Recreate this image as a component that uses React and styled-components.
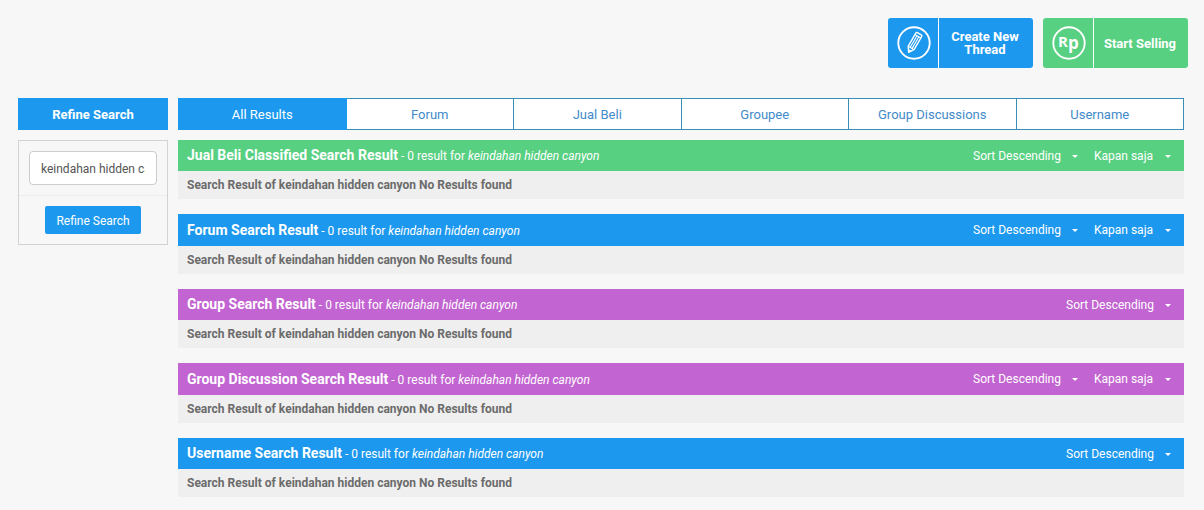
import React, { useState } from "react";
import styled, { createGlobalStyle } from "styled-components";

const colors = {
  blue: "#1c98ee",
  green: "#57d081",
  purple: "#c264d1",
  link: "#428bca",
  tabBorder: "#3a8fb5",
};

const GlobalStyle = createGlobalStyle`
  * {
    box-sizing: border-box;
  }
  body {
    margin: 0;
    background: #f7f7f7;
    color: #6b6b6b;
    font-family: Roboto, "Liberation Sans", sans-serif;
    font-size: 12px;
    line-height: 16px;
  }
  button, input, select {
    font: inherit;
  }
`;

const Page = styled.div`
  padding: 18px 20px 13px 18px;
`;

const Actions = styled.header`
  display: flex;
  justify-content: flex-end;
  gap: 10px;
  margin: 0 -4px 30px 0;
`;

const ActionButton = styled.button`
  display: flex;
  width: 145px;
  height: 50px;
  padding: 0;
  border: none;
  border-radius: 3px;
  background: ${({ $color }) => $color};
  color: #fff;
  font-size: 13px;
  font-weight: 700;
  line-height: 13px;
  cursor: pointer;
`;

const ActionIcon = styled.span`
  display: flex;
  align-items: center;
  justify-content: center;
  width: 51px;
  height: 100%;
  padding-left: 2px;
  border-right: 1px solid #fff;
`;

const ActionLabel = styled.span`
  flex: 1;
  align-self: center;
  padding: 0 9px 0 7px;
  text-align: center;
`;

const Columns = styled.div`
  display: grid;
  grid-template-columns: 150px minmax(0, 1fr);
  align-items: start;
  gap: 10px;
`;

const SideTitle = styled.h2`
  margin: 0 0 10px;
  padding-top: 2px;
  background: ${colors.blue};
  color: #fff;
  font-size: 13px;
  font-weight: 700;
  line-height: 30px;
  text-align: center;
`;

const RefineForm = styled.form`
  border: 1px solid #d3d3d3;
`;

const RefineRow = styled.div`
  padding: 10px;
  text-align: center;
  & + & {
    border-top: 1px solid #ececec;
  }
`;

const SearchInput = styled.input`
  display: block;
  width: 100%;
  height: 34px;
  padding: 8px 11px 6px;
  border: 1px solid #ccc;
  border-radius: 4px;
  background: #fff;
  color: #555;
`;

const SubmitButton = styled.button`
  display: block;
  width: 96px;
  height: 28px;
  margin: 0 auto;
  padding: 2px 0 0;
  border: none;
  border-radius: 2px;
  background: ${colors.blue};
  color: #fff;
  cursor: pointer;
`;

const Tabs = styled.nav`
  display: flex;
  margin-bottom: 10px;
`;

const Tab = styled.a`
  flex: 1 1 0;
  padding-top: 2px;
  border: 1px solid ${({ $active }) => ($active ? colors.blue : colors.tabBorder)};
  border-left-width: 0;
  background: ${({ $active }) => ($active ? colors.blue : "#fff")};
  color: ${({ $active }) => ($active ? "#fff" : colors.link)};
  font-size: 13px;
  line-height: 28px;
  text-align: center;
  text-decoration: none;
  &:first-child {
    border-left-width: 1px;
  }
`;

const Results = styled.div`
  display: flex;
  flex-direction: column;
  gap: 15px;
`;

const ResultHead = styled.div`
  display: flex;
  align-items: center;
  justify-content: space-between;
  height: 31px;
  padding: 0 10px 0 9px;
  background: ${({ $color }) => $color};
  color: #fff;
`;

const Result = styled.section`
  &:nth-child(even) ${ResultHead} {
    height: 32px;
  }
`;

const ResultTitle = styled.div`
  display: flex;
  align-items: baseline;
  gap: 3px;
  h3 {
    margin: 0;
    font-size: 14px;
    font-weight: 700;
  }
`;

const Filters = styled.div`
  display: flex;
  gap: 13px;
`;

const SelectWrap = styled.span`
  position: relative;
  display: flex;
  &::after {
    content: "";
    position: absolute;
    top: 7px;
    right: 3px;
    border: 3px solid transparent;
    border-top-color: #fff;
    border-bottom: none;
    pointer-events: none;
  }
`;

const FilterSelect = styled.select`
  appearance: none;
  height: 16px;
  padding: 0 20px 0 0;
  border: none;
  background: transparent;
  color: #fff;
  cursor: pointer;
  option {
    color: #555;
  }
`;

const ResultBody = styled.p`
  margin: 0;
  padding: 6px 10px 6px 9px;
  background: #efefef;
  font-weight: 700;
`;

const PencilIcon = () => (
  <svg width="34" height="34" viewBox="0 0 34 34" fill="none" stroke="#fff" aria-hidden="true">
    <circle cx="17" cy="17" r="15.7" strokeWidth="1.9" />
    <g transform="rotate(30 17 17)" strokeWidth="1.4" strokeLinejoin="round">
      <path d="M13.6 7.6Q13.6 6.4 14.8 6.4H19.2Q20.4 6.4 20.4 7.6V22.8L17 27.6L13.6 22.8Z" />
      <path d="M13.6 9.2H20.4M15.9 9.2V22.6M18.1 9.2V22.6M13.6 22.8H20.4" strokeWidth="1.1" />
      <path d="M15.7 25.6L17 27.6L18.3 25.6Z" fill="#fff" />
    </g>
  </svg>
);

const RupiahIcon = () => (
  <svg width="34" height="34" viewBox="0 0 34 34" aria-hidden="true">
    <circle cx="17" cy="17" r="15.7" fill="none" stroke="#fff" strokeWidth="1.9" />
    <g fill="#fff" fontFamily="Open Sans, sans-serif" fontWeight="700">
      <text x="6" y="21" fontSize="15">R</text>
      <text x="16" y="23" fontSize="17">p</text>
    </g>
  </svg>
);

const Filter = ({ label, option }) => (
  <SelectWrap>
    <FilterSelect aria-label={label}>
      <option>{option}</option>
    </FilterSelect>
  </SelectWrap>
);

const tabs = ["All Results", "Forum", "Jual Beli", "Groupee", "Group Discussions", "Username"];

const results = [
  { title: "Jual Beli Classified Search Result", color: colors.green, hasTime: true },
  { title: "Forum Search Result", color: colors.blue, hasTime: true },
  { title: "Group Search Result", color: colors.purple },
  { title: "Group Discussion Search Result", color: colors.purple, hasTime: true },
  { title: "Username Search Result", color: colors.blue },
];

const query = "keindahan hidden canyon";

const App = () => {
  const [search, setSearch] = useState(query);

  return (
    <Page>
      <GlobalStyle />
      <Actions>
        <ActionButton type="button" $color={colors.blue}>
          <ActionIcon>
            <PencilIcon />
          </ActionIcon>
          <ActionLabel>Create New Thread</ActionLabel>
        </ActionButton>
        <ActionButton type="button" $color={colors.green}>
          <ActionIcon>
            <RupiahIcon />
          </ActionIcon>
          <ActionLabel>Start Selling</ActionLabel>
        </ActionButton>
      </Actions>

      <Columns>
        <aside>
          <SideTitle>Refine Search</SideTitle>
          <RefineForm onSubmit={(e) => e.preventDefault()}>
            <RefineRow>
              <SearchInput
                type="text"
                aria-label="Search keyword"
                value={search}
                onChange={(e) => setSearch(e.target.value)}
              />
            </RefineRow>
            <RefineRow>
              <SubmitButton type="submit">Refine Search</SubmitButton>
            </RefineRow>
          </RefineForm>
        </aside>

        <main>
          <Tabs>
            {tabs.map((tab, index) => (
              <Tab key={tab} href="#" $active={index === 0}>
                {tab}
              </Tab>
            ))}
          </Tabs>
          <Results>
            {results.map(({ title, color, hasTime }) => (
              <Result key={title}>
                <ResultHead $color={color}>
                  <ResultTitle>
                    <h3>{title}</h3>
                    <span>
                      - 0 result for <em>{query}</em>
                    </span>
                  </ResultTitle>
                  <Filters>
                    <Filter label={`${title} order`} option="Sort Descending" />
                    {hasTime && <Filter label={`${title} time`} option="Kapan saja" />}
                  </Filters>
                </ResultHead>
                <ResultBody>Search Result of {query} No Results found</ResultBody>
              </Result>
            ))}
          </Results>
        </main>
      </Columns>
    </Page>
  );
};

export default App;
